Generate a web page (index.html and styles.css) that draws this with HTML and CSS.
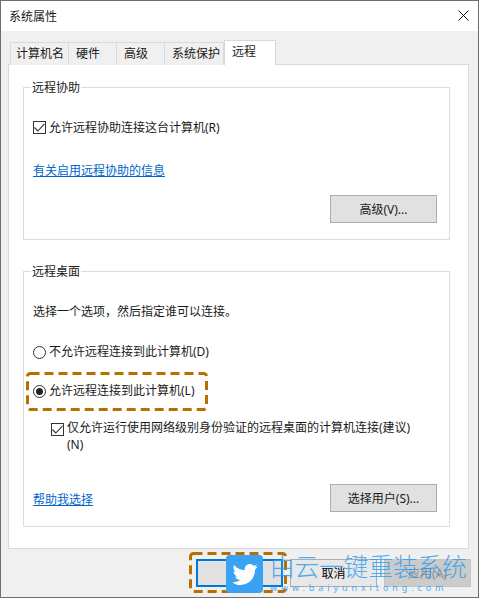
FILE: index.html
```html
<!DOCTYPE html>
<html lang="zh-CN">
<head>
  <meta charset="utf-8">
  <title>系统属性</title>
  <link rel="stylesheet" href="styles.css">
</head>
<body>
  <div class="dialog">
    <div class="titlebar">
      <span>系统属性</span>
      <svg class="close-icon" width="11" height="11" viewBox="0 0 11 11"><path d="M0.5 0.5L10.5 10.5M10.5 0.5L0.5 10.5" stroke="#111" fill="none"/></svg>
    </div>

    <div class="content">
      <div class="tabs">
        <div class="tab tab-first">计算机名</div>
        <div class="tab tab-short">硬件</div>
        <div class="tab tab-short">高级</div>
        <div class="tab tab-long">系统保护</div>
        <div class="tab tab-active">远程</div>
      </div>

      <div class="panel">
        <fieldset class="group group-assist">
          <legend>远程协助</legend>
          <label class="row">
            <span class="check"><svg width="11" height="9" viewBox="0 0 11 9"><path d="M0.5 4.5L3.8 8L10.5 0.8" stroke="#333" stroke-width="1.1" fill="none"/></svg></span>
            允许远程协助连接这台计算机(R)
          </label>
          <a class="link link-assist" href="#">有关启用远程协助的信息</a>
          <div class="btn-row"><button class="btn">高级(V)...</button></div>
        </fieldset>

        <fieldset class="group group-desktop">
          <legend>远程桌面</legend>
          <p class="hint">选择一个选项，然后指定谁可以连接。</p>
          <label class="row row-radio"><span class="radio"></span>不允许远程连接到此计算机(D)</label>
          <label class="row row-radio row-second"><span class="radio radio-on"></span>允许远程连接到此计算机(L)</label>
          <label class="row row-nla">
            <span class="check"><svg width="11" height="9" viewBox="0 0 11 9"><path d="M0.5 4.5L3.8 8L10.5 0.8" stroke="#333" stroke-width="1.1" fill="none"/></svg></span>
            <span>仅允许运行使用网络级别身份验证的远程桌面的计算机连接(建议)<br>(N)</span>
          </label>
          <div class="foot-row">
            <a class="link" href="#">帮助我选择</a>
            <button class="btn">选择用户(S)...</button>
          </div>
        </fieldset>
      </div>

      <div class="actions">
        <button class="btn btn-ok"></button>
        <button class="btn btn-cancel">取消</button>
        <button class="btn btn-apply">应用(A)</button>
      </div>
    </div>

    <svg class="mark mark-radio" width="182" height="39"><rect x="1.500" y="1.500" width="179" height="36" rx="3" /></svg>
    <svg class="mark mark-ok" width="98" height="41"><rect x="1.500" y="1.500" width="95" height="38" rx="3" /></svg>

    <div class="logo">
      <svg width="26" height="21" viewBox="0 0 24 20"><path d="M24 2.400c-.9.400-1.800.700-2.800.800 1-.600 1.800-1.600 2.200-2.700-1 .600-2 1-3.100 1.200C19.400.700 18.100 0 16.600 0c-2.700 0-4.900 2.200-4.900 4.900 0 .400 0 .800.100 1.100C7.700 5.800 4.100 3.900 1.700.900 1.200 1.600 1 2.500 1 3.400c0 1.700.900 3.200 2.200 4.100-.800 0-1.600-.200-2.200-.600v.100c0 2.400 1.700 4.400 3.900 4.800-.400.100-.800.200-1.300.200-.300 0-.600 0-.900-.100.600 2 2.400 3.400 4.600 3.400-1.700 1.300-3.800 2.100-6.100 2.100-.400 0-.800 0-1.200-.100C2.200 19.300 4.800 20 7.500 20c9.100 0 14-7.500 14-14v-.600c1-.700 1.800-1.600 2.500-3z" fill="#fff"/></svg>
    </div>
    <div class="brand">
      <div class="brand-name">由云一键重装系统</div>
      <div class="brand-url">www.baiyunxitong.com</div>
    </div>
  </div>
</body>
</html>
```

FILE: styles.css
```css
* {
  margin: 0;
  padding: 0;
  box-sizing: border-box;
}

html, body {
  width: 479px;
  height: 598px;
  overflow: hidden;
}

body {
  font-family: "Noto Sans", "Noto Sans CJK SC", sans-serif;
  font-size: 12px;
  color: #1a1a1a;
  background: #f0f0f0;
}

.dialog {
  position: relative;
  width: 479px;
  height: 598px;
  border: 1px solid #6e6e6e;
  background: #f0f0f0;
  overflow: hidden;
}

.titlebar {
  height: 30px;
  background: #fff;
  display: flex;
  align-items: center;
  justify-content: space-between;
  padding: 0 9px 1px 8px;
}

.close-icon {
  display: block;
}

.content {
  padding: 10px 9px 0 7px;
}

.tabs {
  display: flex;
  align-items: flex-end;
  height: 24px;
  padding-left: 2px;
  margin-bottom: -1px;
}

.tab {
  height: 23px;
  line-height: 21px;
  padding: 0 7px;
  margin-left: -1px;
  white-space: nowrap;
  background: #f0f0f0;
  border: 1px solid #d9d9d9;
  border-bottom: none;
}

.tab-first {
  width: 59px;
  margin-left: 0;
  padding: 0 5px;
}

.tab-short {
  width: 49px;
}

.tab-long {
  width: 60px;
}

.tab-active {
  position: relative;
  z-index: 1;
  width: 52px;
  height: 25px;
  line-height: 22px;
  margin-left: 0;
  background: #fff;
}

.panel {
  height: 485px;
  background: #fff;
  border: 1px solid #d9d9d9;
  padding: 14px 18px 0 14px;
}

.group {
  border: 1px solid #dcdcdc;
  padding: 0 12px 0 9px;
}

.group legend {
  margin-left: -2px;
  padding: 0 1px;
  line-height: 17px;
}

.group-assist {
  height: 161px;
  margin-bottom: 23px;
}

.group-desktop {
  height: 264px;
}

.row {
  display: flex;
  align-items: center;
  line-height: 17px;
}

.group-assist .row {
  margin-top: 23px;
}

.check {
  flex: none;
  width: 13px;
  height: 13px;
  margin-right: 3px;
  border: 1px solid #333;
  background: #fff;
  display: flex;
  align-items: center;
  justify-content: center;
}

.radio {
  flex: none;
  width: 13px;
  height: 13px;
  margin-right: 3px;
  margin-top: 2px;
  border: 1px solid #333;
  border-radius: 50%;
  background: #fff;
  display: flex;
  align-items: center;
  justify-content: center;
}

.radio-on::after {
  content: "";
  width: 7px;
  height: 7px;
  border-radius: 50%;
  background: #222;
}

.link {
  color: #0066cc;
  text-decoration: underline;
}

.link-assist {
  display: block;
  margin-top: 26px;
  line-height: 17px;
}

.btn-row {
  display: flex;
  justify-content: flex-end;
  margin-top: 16px;
}

.btn {
  width: 107px;
  height: 28px;
  font: inherit;
  color: #1a1a1a;
  background: #e1e1e1;
  border: 1px solid #adadad;
}

.hint {
  margin-top: 23px;
  line-height: 17px;
}

.row-radio {
  margin-top: 23px;
}

.row-second {
  margin-top: 22px;
}

.row-nla {
  align-items: flex-start;
  margin-top: 20px;
  margin-left: 18px;
}

.row-nla .check {
  margin-top: 4px;
}

.foot-row {
  display: flex;
  justify-content: space-between;
  align-items: center;
  margin-top: 31px;
}

.foot-row .link {
  margin-top: 2px;
}

.actions {
  display: flex;
  justify-content: flex-end;
  margin: 10px -2px 0 0;
}

.btn-ok {
  width: 87px;
  border: 2px solid #0078d7;
}

.btn-cancel {
  width: 87px;
  margin: 0 7px 0 7px;
  color: #000;
  background: #e8e8e8;
}

.btn-apply {
  width: 87px;
  color: #8a8a8a;
  background: #cbcbcb;
  border-color: #c4c4c4;
}

/* orange dashed callouts drawn over the screenshot */
.mark {
  position: absolute;
  display: block;
}

.mark rect {
  fill: none;
  stroke: #b86e00;
  stroke-width: 3;
  stroke-dasharray: 9 5;
}

.mark-radio {
  left: 25px;
  top: 371px;
}

.mark-ok {
  left: 188px;
  top: 551px;
}

/* site watermark */
.logo {
  position: absolute;
  left: 225px;
  top: 554px;
  width: 37px;
  height: 38px;
  border-radius: 4px;
  background: #3aa2f2;
  display: flex;
  align-items: center;
  justify-content: center;
}

.brand {
  position: absolute;
  left: 269px;
  top: 551px;
  width: 200px;
  color: #2b9bf0;
}

.brand-name {
  font-size: 24.600px;
  line-height: 30px;
  white-space: nowrap;
  font-weight: 300;
  opacity: 0.8;
}

.brand-url {
  font-size: 9px;
  line-height: 11px;
  letter-spacing: 3.900px;
  white-space: nowrap;
  opacity: 0.8;
}
```
